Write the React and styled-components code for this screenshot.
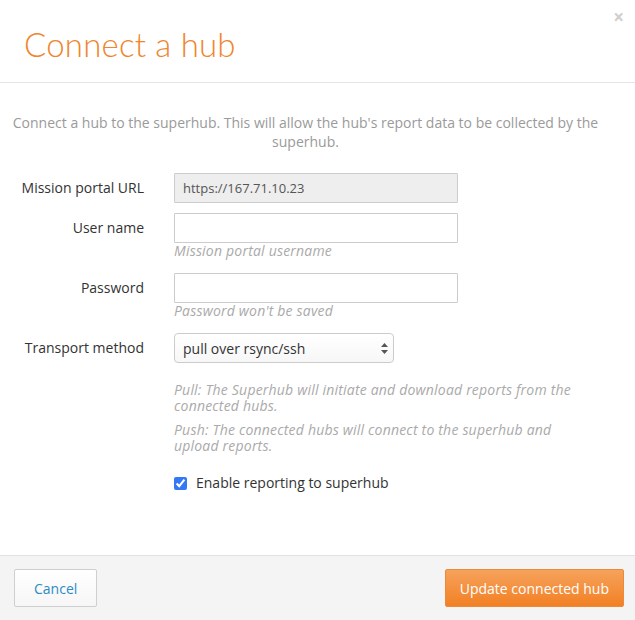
import React, { useState } from 'react';
import styled, { createGlobalStyle } from 'styled-components';

const GlobalStyle = createGlobalStyle`
  html, body {
    margin: 0;
    padding: 0;
    background: #ffffff;
  }
  body {
    font-family: "Open Sans", Lato, "Liberation Sans", sans-serif;
    color: #333;
  }
`;

const Dialog = styled.div`
  width: 635px;
  height: 620px;
  display: flex;
  flex-direction: column;
  background: #fff;
`;

const Header = styled.div`
  position: relative;
  height: 83px;
  border-bottom: 1px solid #e5e5e5;
  padding: 22px 24px 0;
  box-sizing: border-box;
  flex: 0 0 auto;
`;

const Title = styled.h1`
  margin: 0;
  font-family: Lato, "Open Sans", sans-serif;
  font-size: 33px;
  font-weight: 300;
  line-height: 44px;
  color: #f0852d;
  letter-spacing: 0.2px;
`;

const Close = styled.span`
  position: absolute;
  top: 7px;
  right: 11px;
  font-size: 19px;
  font-weight: 700;
  color: #cfcfcf;
  line-height: 20px;
  cursor: pointer;
`;

const Body = styled.div`
  flex: 1;
  padding: 30px 38px 0 14px;
`;

const Intro = styled.p`
  margin: 0 -6px 22px -6px;
  text-align: center;
  font-size: 14px;
  line-height: 19px;
  color: #9a9a9a;
`;

const Row = styled.div`
  display: grid;
  grid-template-columns: 130px 1fr;
  column-gap: 30px;
  margin-bottom: 10px;
`;

const Label = styled.label`
  text-align: right;
  font-size: 14px;
  line-height: 30px;
  color: #333;
  white-space: nowrap;
`;

const Field = styled.div`
  display: flex;
  flex-direction: column;
`;

const TextInput = styled.input`
  box-sizing: border-box;
  width: 284px;
  height: 30px;
  padding: 0 8px;
  border: 1px solid #ccc;
  border-radius: 1px;
  font-family: inherit;
  font-size: 13px;
  color: #555;
  background: ${(p) => (p.readOnly ? '#eeeeee' : '#fff')};
  outline: none;
`;

const Help = styled.p`
  margin: 0 0 ${(p) => p.$gap ?? 4}px;
  font-size: 14px;
  letter-spacing: 0.2px;
  line-height: 16px;
  font-style: italic;
  color: #aaa;
  max-width: ${(p) => p.$max || 'none'};
`;

const SelectWrap = styled.div`
  position: relative;
  width: 220px;
  height: 30px;
`;

const Select = styled.select`
  appearance: none;
  box-sizing: border-box;
  width: 100%;
  height: 30px;
  padding: 0 24px 0 8px;
  border: 1px solid #ccc;
  border-radius: 4px;
  background: linear-gradient(#ffffff, #f7f7f7);
  font-family: inherit;
  font-size: 14px;
  color: #333;
  outline: none;
`;

const Arrows = styled.svg`
  position: absolute;
  right: 6px;
  top: 10px;
  pointer-events: none;
`;

const Notes = styled.div`
  margin: 19px 0 0 160px;
`;

const CheckRow = styled.label`
  display: flex;
  align-items: center;
  gap: 9px;
  margin: 19px 0 0 160px;
  font-size: 14px;
  line-height: 20px;
  color: #333;
`;

const Check = styled.input`
  width: 13px;
  height: 13px;
  margin: 0;
  accent-color: #3478f6;
`;

const Footer = styled.div`
  flex: 0 0 65px;
  border-top: 1px solid #e2e2e2;
  background: #f4f4f4;
  display: flex;
  align-items: center;
  justify-content: space-between;
  padding: 0 11px 0 14px;
  box-sizing: border-box;
`;

const Button = styled.button`
  height: 38px;
  padding: 0 ${(p) => (p.$primary ? 14 : 19)}px;
  border-radius: 2px;
  font-family: inherit;
  font-size: 14px;
  cursor: pointer;
  border: 1px solid ${(p) => (p.$primary ? '#ec8a3a' : '#cfcfcf')};
  color: ${(p) => (p.$primary ? '#fff' : '#2b8bc4')};
  background: ${(p) =>
    p.$primary
      ? 'linear-gradient(#f6a25c, #f28024)'
      : 'linear-gradient(#ffffff, #f6f6f6)'};
`;

export default function App() {
  const [enabled, setEnabled] = useState(true);
  const [method, setMethod] = useState('pull');

  return (
    <>
      <GlobalStyle />
      <Dialog>
        <Header>
          <Title>Connect a hub</Title>
          <Close>×</Close>
        </Header>
        <Body>
          <Intro>
            Connect a hub to the superhub. This will allow the hub's report data to be collected by the superhub.
          </Intro>

          <Row>
            <Label>Mission portal URL</Label>
            <Field>
              <TextInput readOnly value="https://167.71.10.23" />
            </Field>
          </Row>

          <Row>
            <Label>User name</Label>
            <Field>
              <TextInput type="text" />
              <Help>Mission portal username</Help>
            </Field>
          </Row>

          <Row>
            <Label>Password</Label>
            <Field>
              <TextInput type="password" />
              <Help>Password won't be saved</Help>
            </Field>
          </Row>

          <Row>
            <Label>Transport method</Label>
            <Field>
              <SelectWrap>
                <Select value={method} onChange={(e) => setMethod(e.target.value)}>
                  <option value="pull">pull over rsync/ssh</option>
                  <option value="push">push over rsync/ssh</option>
                </Select>
                <Arrows width="7" height="11" viewBox="0 0 7 11">
                  <path d="M3.5 0 L7 4 H0 Z" fill="#555" />
                  <path d="M3.5 11 L7 7 H0 Z" fill="#555" />
                </Arrows>
              </SelectWrap>
            </Field>
          </Row>

          <Notes>
            <Help $gap={8} $max="420px">
              Pull: The Superhub will initiate and download reports from the connected hubs.
            </Help>
            <Help $gap={0} $max="420px">
              Push: The connected hubs will connect to the superhub and upload reports.
            </Help>
          </Notes>

          <CheckRow>
            <Check type="checkbox" checked={enabled} onChange={(e) => setEnabled(e.target.checked)} />
            Enable reporting to superhub
          </CheckRow>
        </Body>
        <Footer>
          <Button>Cancel</Button>
          <Button $primary>Update connected hub</Button>
        </Footer>
      </Dialog>
    </>
  );
}
